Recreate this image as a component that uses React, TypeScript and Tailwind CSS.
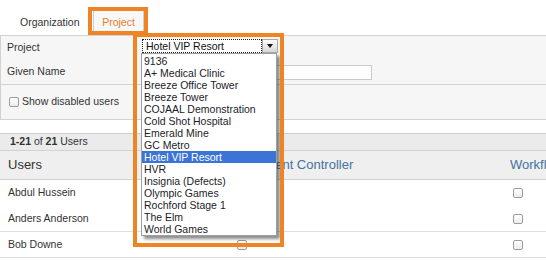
import React from "react";

const items = [
  "9136",
  "A+ Medical Clinic",
  "Breeze Office Tower",
  "Breeze Tower",
  "COJAAL Demonstration",
  "Cold Shot Hospital",
  "Emerald Mine",
  "GC Metro",
  "Hotel VIP Resort",
  "HVR",
  "Insignia (Defects)",
  "Olympic Games",
  "Rochford Stage 1",
  "The Elm",
  "World Games",
];

function Box() {
  return (
    <div className="w-[10px] h-[10px] rounded-[2px] border border-[#9c9c9c] bg-gradient-to-b from-white to-[#ececec]" />
  );
}

const users = [
  { name: "Abdul Hussein", border: false },
  { name: "Anders Anderson", border: true },
  { name: "Bob Downe", border: true },
];

export default function App() {
  return (
    <div className="relative w-[546px] h-[260px] overflow-hidden bg-white font-['Liberation_Sans',Arial,sans-serif] text-[10.5px] text-[#333]">
      {/* Tabs */}
      <div className="h-[35px] flex items-end pl-[20px]">
        <div className="w-[73px] h-[25px] flex items-center text-[#333]">Organization</div>
        <div className="w-[51px] h-[25px] border border-b-0 border-[#cfcfcf] bg-[#f8f8f8] flex items-center justify-center text-[#ec7a2e]">
          Project
        </div>
      </div>

      {/* Form */}
      <div className="border-t border-l border-[#d2d2d2] bg-[#f6f6f6]">
        <div className="h-[24px] flex items-start">
          <div className="w-[141px] h-[23px] pl-[6px] flex items-center">Project</div>
          <div className="mt-[3px] w-[136px] h-[14px] flex bg-white">
            <div className="flex-1 border border-dotted border-[#222] pl-[3px] flex items-center text-[#111] leading-none">
              Hotel VIP Resort
            </div>
            <div className="w-[16px] border border-[#a8a8a8] bg-gradient-to-b from-[#fbfbfb] to-[#d8d8d8] flex items-center justify-center">
              <div className="w-0 h-0 border-l-[3px] border-r-[3px] border-t-[4px] border-l-transparent border-r-transparent border-t-[#111]" />
            </div>
          </div>
        </div>
        <div className="h-[25px] flex items-center border-b border-[#d2d2d2]">
          <div className="w-[141px] pl-[6px]">Given Name</div>
          <div className="w-[230px] h-[15px] bg-white border border-[#cbcbcb]" />
        </div>
        <div className="h-[35px] flex items-center pl-[8px] gap-[3px] border-b border-[#d2d2d2]">
          <Box />
          <span>Show disabled users</span>
        </div>
      </div>

      {/* Table */}
      <div className="mt-[13px]">
        <div className="h-[17px] border-t border-[#cfcfcf] bg-[#ebebeb] flex items-center pl-[10px]">
          <b>1-21</b>&nbsp;of&nbsp;<b>21</b>&nbsp;Users
        </div>
        <div className="h-[30px] border-t border-b border-[#d2d2d2] bg-[#efefef] grid grid-cols-[226px_276px_1fr] items-center text-[13px]">
          <div className="pl-[8px] text-[#333]">Users</div>
          <div className="pl-[8px] text-[#44739f] whitespace-nowrap">Document Controller</div>
          <div className="pl-[8px] text-[#44739f] whitespace-nowrap">Workflow</div>
        </div>
        {users.map((u) => (
          <div
            key={u.name}
            className={`h-[26px] grid grid-cols-[226px_276px_1fr] items-center ${u.border ? "border-b border-[#dedede]" : ""}`}
          >
            <div className="pl-[8px]">{u.name}</div>
            <div className="pl-[11px]">
              <Box />
            </div>
            <div className="pl-[11px]">
              <Box />
            </div>
          </div>
        ))}
      </div>

      {/* Dropdown list overlay */}
      <div className="absolute left-[141px] top-[53px] w-[136px] h-[183px] bg-white border border-[#a0a0a0] pt-[1px] shadow-[3px_3px_3px_rgba(0,0,0,0.45)]">
        {items.map((it) => (
          <div
            key={it}
            className={`h-[12px] leading-[12px] pl-[2px] whitespace-nowrap ${
              it === "Hotel VIP Resort" ? "bg-[#3b74d4] text-white" : "text-[#1c1c28]"
            }`}
          >
            {it}
          </div>
        ))}
      </div>

      {/* Orange annotation frames */}
      <div className="absolute left-[88px] top-[7px] w-[60px] h-[28px] border-[4px] border-[#ef8424]" />
      <div className="absolute left-[133px] top-[33px] w-[151px] h-[214px] border-[4px] border-[#ef8424]" />
    </div>
  );
}
